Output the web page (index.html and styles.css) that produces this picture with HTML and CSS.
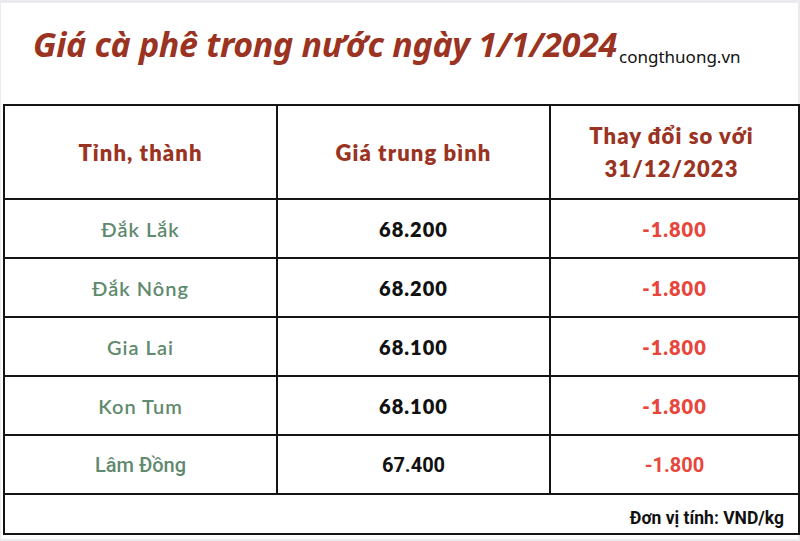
FILE: index.html
```html
<!DOCTYPE html>
<html lang="vi">
<head>
<meta charset="utf-8">
<title>Giá cà phê trong nước ngày 1/1/2024</title>
<link rel="stylesheet" href="styles.css">
</head>
<body>
<div class="sheet">
  <div class="title-row">
    <h1 class="title">Giá cà phê trong nước ngày 1/1/2024</h1><span class="source">congthuong.vn</span>
  </div>
  <table class="prices">
    <colgroup>
      <col class="c1"><col class="c2"><col class="c3">
    </colgroup>
    <thead>
      <tr class="head">
        <th>Tỉnh, thành</th>
        <th>Giá trung bình</th>
        <th class="h3">Thay đổi so với<br>31/12/2023</th>
      </tr>
    </thead>
    <tbody>
      <tr class="row"><td class="prov">Đắk Lắk</td><td class="val">68.200</td><td class="chg">-1.800</td></tr>
      <tr class="row"><td class="prov">Đắk Nông</td><td class="val">68.200</td><td class="chg">-1.800</td></tr>
      <tr class="row"><td class="prov">Gia Lai</td><td class="val">68.100</td><td class="chg">-1.800</td></tr>
      <tr class="row"><td class="prov">Kon Tum</td><td class="val">68.100</td><td class="chg">-1.800</td></tr>
      <tr class="row alt"><td class="prov">Lâm Đồng</td><td class="val">67.400</td><td class="chg">-1.800</td></tr>
      <tr class="foot"><td colspan="3">Đơn vị tính: VND/kg</td></tr>
    </tbody>
  </table>
</div>
</body>
</html>
```
FILE: styles.css
```css
html, body {
  margin: 0;
  padding: 0;
}
body {
  background: #ebebef;
  width: 800px;
  height: 541px;
  overflow: hidden;
  padding: 3px 2px 2px 1px;
  box-sizing: border-box;
}
.sheet {
  background: #fff;
  height: 536px;
  padding-left: 2px;
  box-sizing: border-box;
}
.title-row {
  height: 101px;
  box-sizing: border-box;
  padding: 18px 0 0 30px;
  white-space: nowrap;
}
.title {
  display: inline;
  margin: 0;
  font-family: "Noto Sans", sans-serif;
  font-style: italic;
  font-weight: 700;
  font-size: 34px;
  color: #9a3322;
  letter-spacing: -0.3px;
}
.source {
  font-family: "Noto Sans", sans-serif;
  font-size: 17px;
  color: #111;
  margin-left: 2px;
  vertical-align: -6px;
}
.prices {
  border-collapse: collapse;
  width: 795px;
  table-layout: fixed;
  font-family: Lato, "Noto Sans", sans-serif;
}
.c1 { width: 273px; }
.c2 { width: 273px; }
.c3 { width: 249px; }
.prices th, .prices td {
  border: 2px solid #141414;
  text-align: center;
  padding: 0;
}
.head th {
  height: 92px;
  color: #9a3322;
  font-weight: 800;
  font-size: 22px;
  letter-spacing: 1.1px;
  line-height: 33px;
}
.head .h3 {
  padding-right: 6px;
}
.row td {
  height: 57px;
  font-size: 20px;
  letter-spacing: 1px;
}
.prov {
  color: #5f8a6e;
  font-weight: 600;
}
.val {
  color: #111;
  font-weight: 800;
}
.chg {
  color: #e8463b;
  font-weight: 800;
}
.row.alt td {
  font-family: Roboto, sans-serif;
  font-weight: 500;
  letter-spacing: 0;
}
.row.alt .val, .row.alt .chg {
  font-weight: 700;
}
.foot td {
  height: 40px;
  text-align: right;
  padding: 8px 14px 0 0;
  box-sizing: border-box;
  font-family: Roboto, sans-serif;
  font-weight: 700;
  font-size: 17.5px;
  letter-spacing: 0;
  color: #111;
}
```
